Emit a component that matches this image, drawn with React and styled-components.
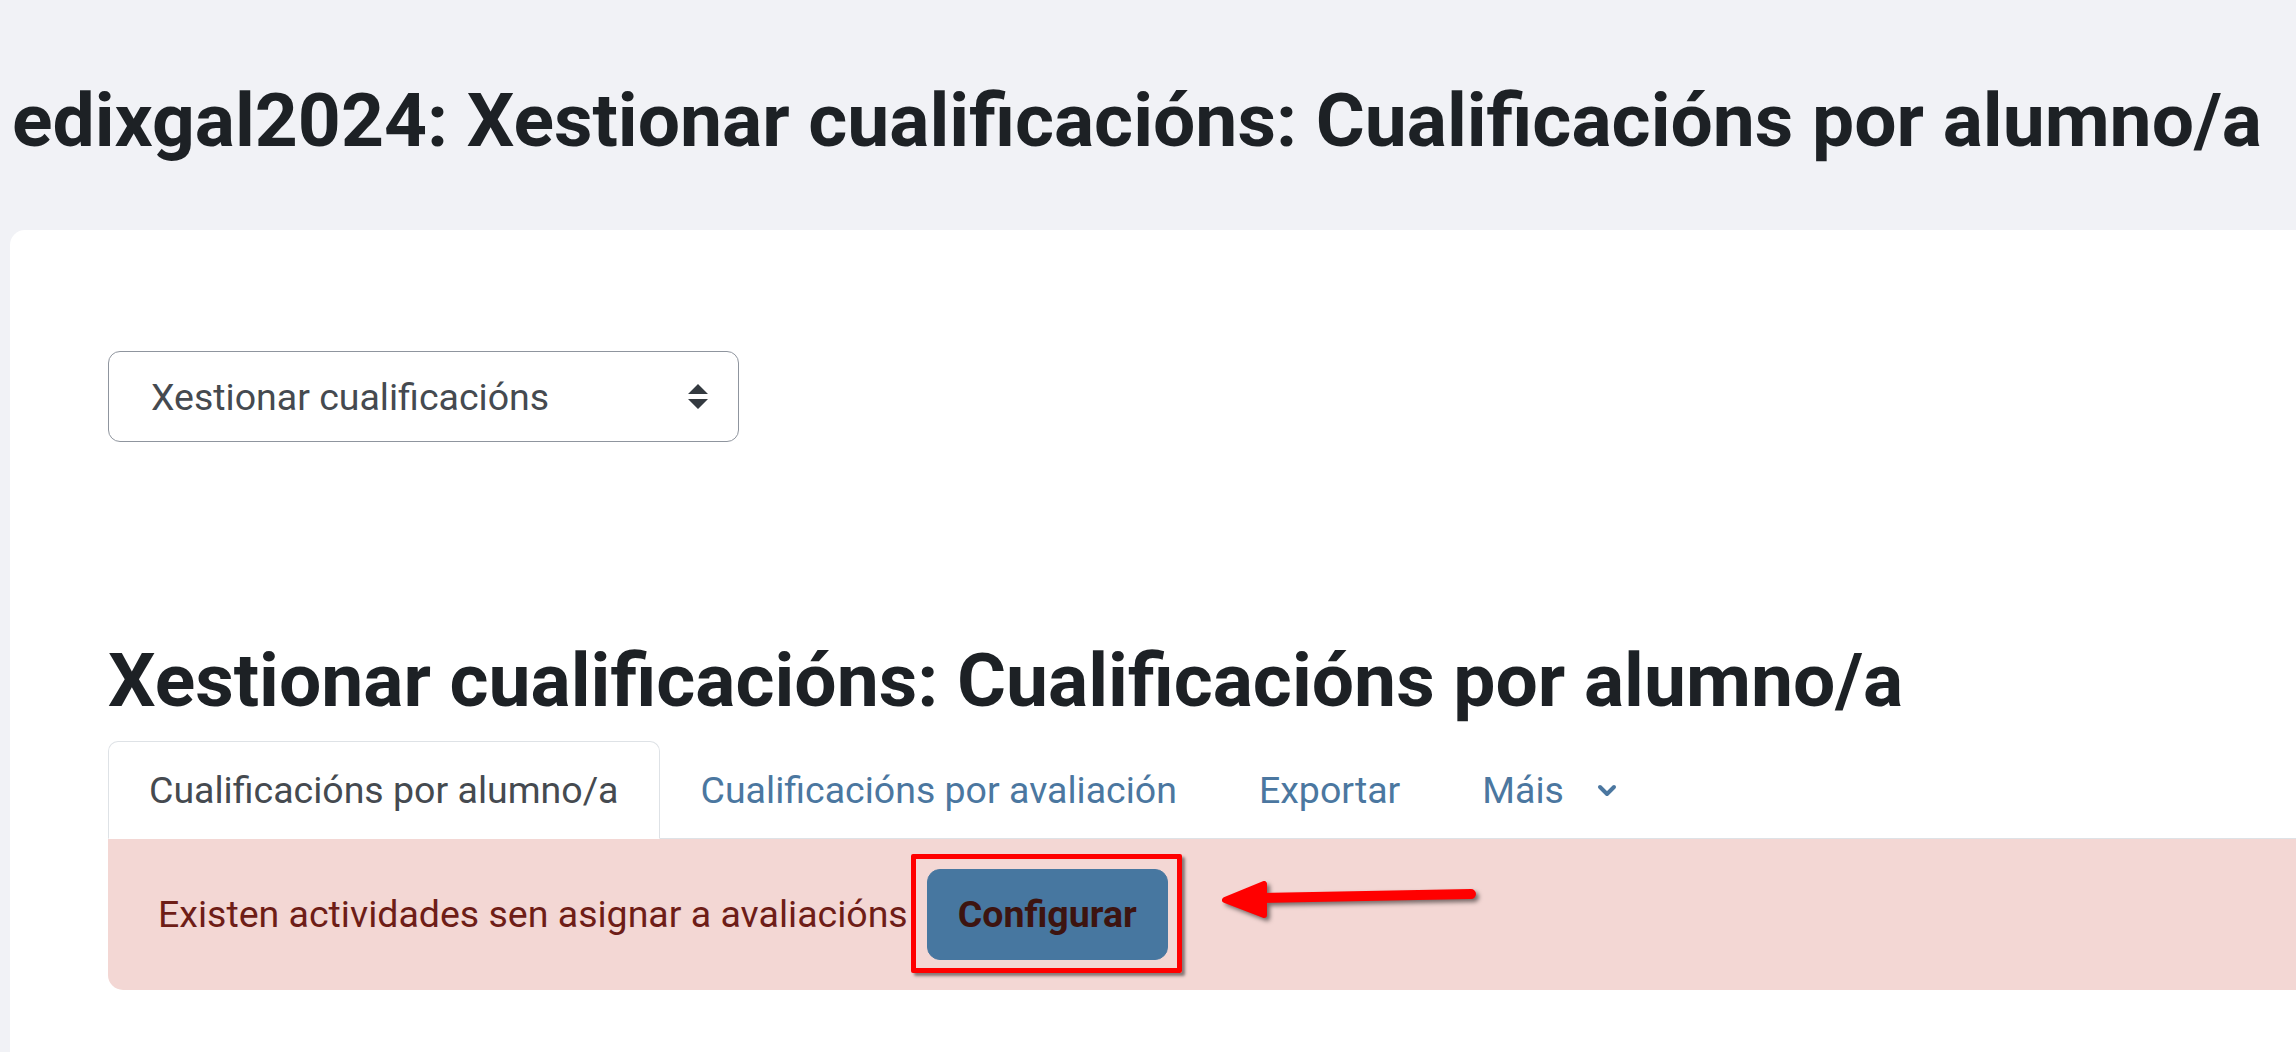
import styled, { createGlobalStyle } from 'styled-components'

const GlobalStyle = createGlobalStyle`
    html, body {
        margin: 0;
        padding: 0;
        overflow: hidden;
        background: #f1f2f6;
    }
    body {
        font-family: Roboto, "Liberation Sans", sans-serif;
        color: #1d2125;
    }
`

const Page = styled.div`
    height: 100vh;
    box-sizing: border-box;
    padding-top: 75px;
    display: flex;
    flex-direction: column;
`

const PageTitle = styled.h1`
    margin: 0 0 65px 12px;
    font-size: 75px;
    font-weight: 700;
    line-height: 1.2;
    white-space: nowrap;
`

// the page body runs off the right edge, so only its top-left corner is rounded
const Card = styled.div`
    flex: 1;
    margin-left: 10px;
    padding: 121px 0 0 98px;
    background: #fff;
    border-radius: 15px 0 0 0;
`

const SelectBox = styled.div`
    display: flex;
    align-items: center;
    justify-content: space-between;
    width: 631px;
    height: 91px;
    box-sizing: border-box;
    padding: 0 30px 0 42px;
    border: 1px solid #8f959e;
    border-radius: 12px;
    font-size: 37.5px;
    color: #454a50;
`

const Heading = styled.h2`
    margin: 193px 0 16px;
    font-size: 75px;
    font-weight: 700;
    line-height: 1.2;
    white-space: nowrap;
`

const Tabs = styled.ul`
    display: flex;
    margin: 0;
    padding: 0;
    list-style: none;
    border-bottom: 1px solid #dee2e6;
`

const Tab = styled.li`
    display: flex;
    align-items: center;
    gap: 33px;
    margin-bottom: -1px;
    padding: 20px 40px;
    font-size: 37.5px;
    line-height: 1.5;
    border: 1px solid ${p => (p.$active ? '#dee2e6' : 'transparent')};
    border-bottom-color: ${p => (p.$active ? '#fff' : 'transparent')};
    border-radius: 10px 10px 0 0;
    background: ${p => (p.$active ? '#fff' : 'transparent')};
    color: ${p => (p.$active ? '#454a50' : '#4b77a0')};
`

const Alert = styled.div`
    display: flex;
    align-items: center;
    padding: 30px 50px;
    background: #f3d7d4;
    border-radius: 0 0 0 15px;
    font-size: 37.5px;
    color: #6e1d17;
`

const ButtonWrap = styled.span`
    position: relative;
    margin-left: 19px;
`

const Button = styled.button`
    display: block;
    padding: 16px 30px;
    border: 1px solid #4777a0;
    border-radius: 13px;
    background: #4777a0;
    font-family: inherit;
    font-size: 37.5px;
    font-weight: 700;
    line-height: 1.5;
    color: #3d1410;
`

// red highlight frame drawn over the button
const Highlight = styled.span`
    position: absolute;
    inset: -15px -14px -13px -16px;
    border: 5px solid #ff0000;
    border-radius: 2px;
    box-shadow: 3px 3px 3px rgba(0, 0, 0, 0.45);
    pointer-events: none;
`

const Pointer = styled.svg`
    position: absolute;
    left: calc(100% + 47px);
    top: 11px;
    overflow: visible;
    filter: drop-shadow(3px 3px 2px rgba(0, 0, 0, 0.5));
`

function SortArrows() {
    return (
        <svg width="20" height="25" viewBox="0 0 4 5">
            <path d="M2 0L0 2h4zm0 5L0 3h4z" fill="#343a40" />
        </svg>
    )
}

function Chevron() {
    return (
        <svg width="20" height="13" viewBox="0 0 20 13">
            <path d="M3 3l7 7 7-7" fill="none" stroke="#4b77a0" strokeWidth="4" strokeLinecap="round" strokeLinejoin="round" />
        </svg>
    )
}

export default function App() {
    return (
        <>
            <GlobalStyle />
            <Page>
                <PageTitle>edixgal2024: Xestionar cualificacións: Cualificacións por alumno/a</PageTitle>
                <Card>
                    <SelectBox>
                        <span>Xestionar cualificacións</span>
                        <SortArrows />
                    </SelectBox>

                    <Heading>Xestionar cualificacións: Cualificacións por alumno/a</Heading>

                    <Tabs>
                        <Tab $active>Cualificacións por alumno/a</Tab>
                        <Tab>Cualificacións por avaliación</Tab>
                        <Tab>Exportar</Tab>
                        <Tab>Máis <Chevron /></Tab>
                    </Tabs>

                    <Alert>
                        Existen actividades sen asignar a avaliacións
                        <ButtonWrap>
                            <Button>Configurar</Button>
                            <Highlight />
                            <Pointer width="260" height="40" viewBox="0 0 260 40">
                                <path d="M44 18L256 14" stroke="#ff0000" strokeWidth="10" strokeLinecap="round" />
                                <path d="M10 20L49 4L49 35Z" fill="#ff0000" stroke="#ff0000" strokeWidth="6" strokeLinejoin="round" />
                            </Pointer>
                        </ButtonWrap>
                    </Alert>
                </Card>
            </Page>
        </>
    )
}
